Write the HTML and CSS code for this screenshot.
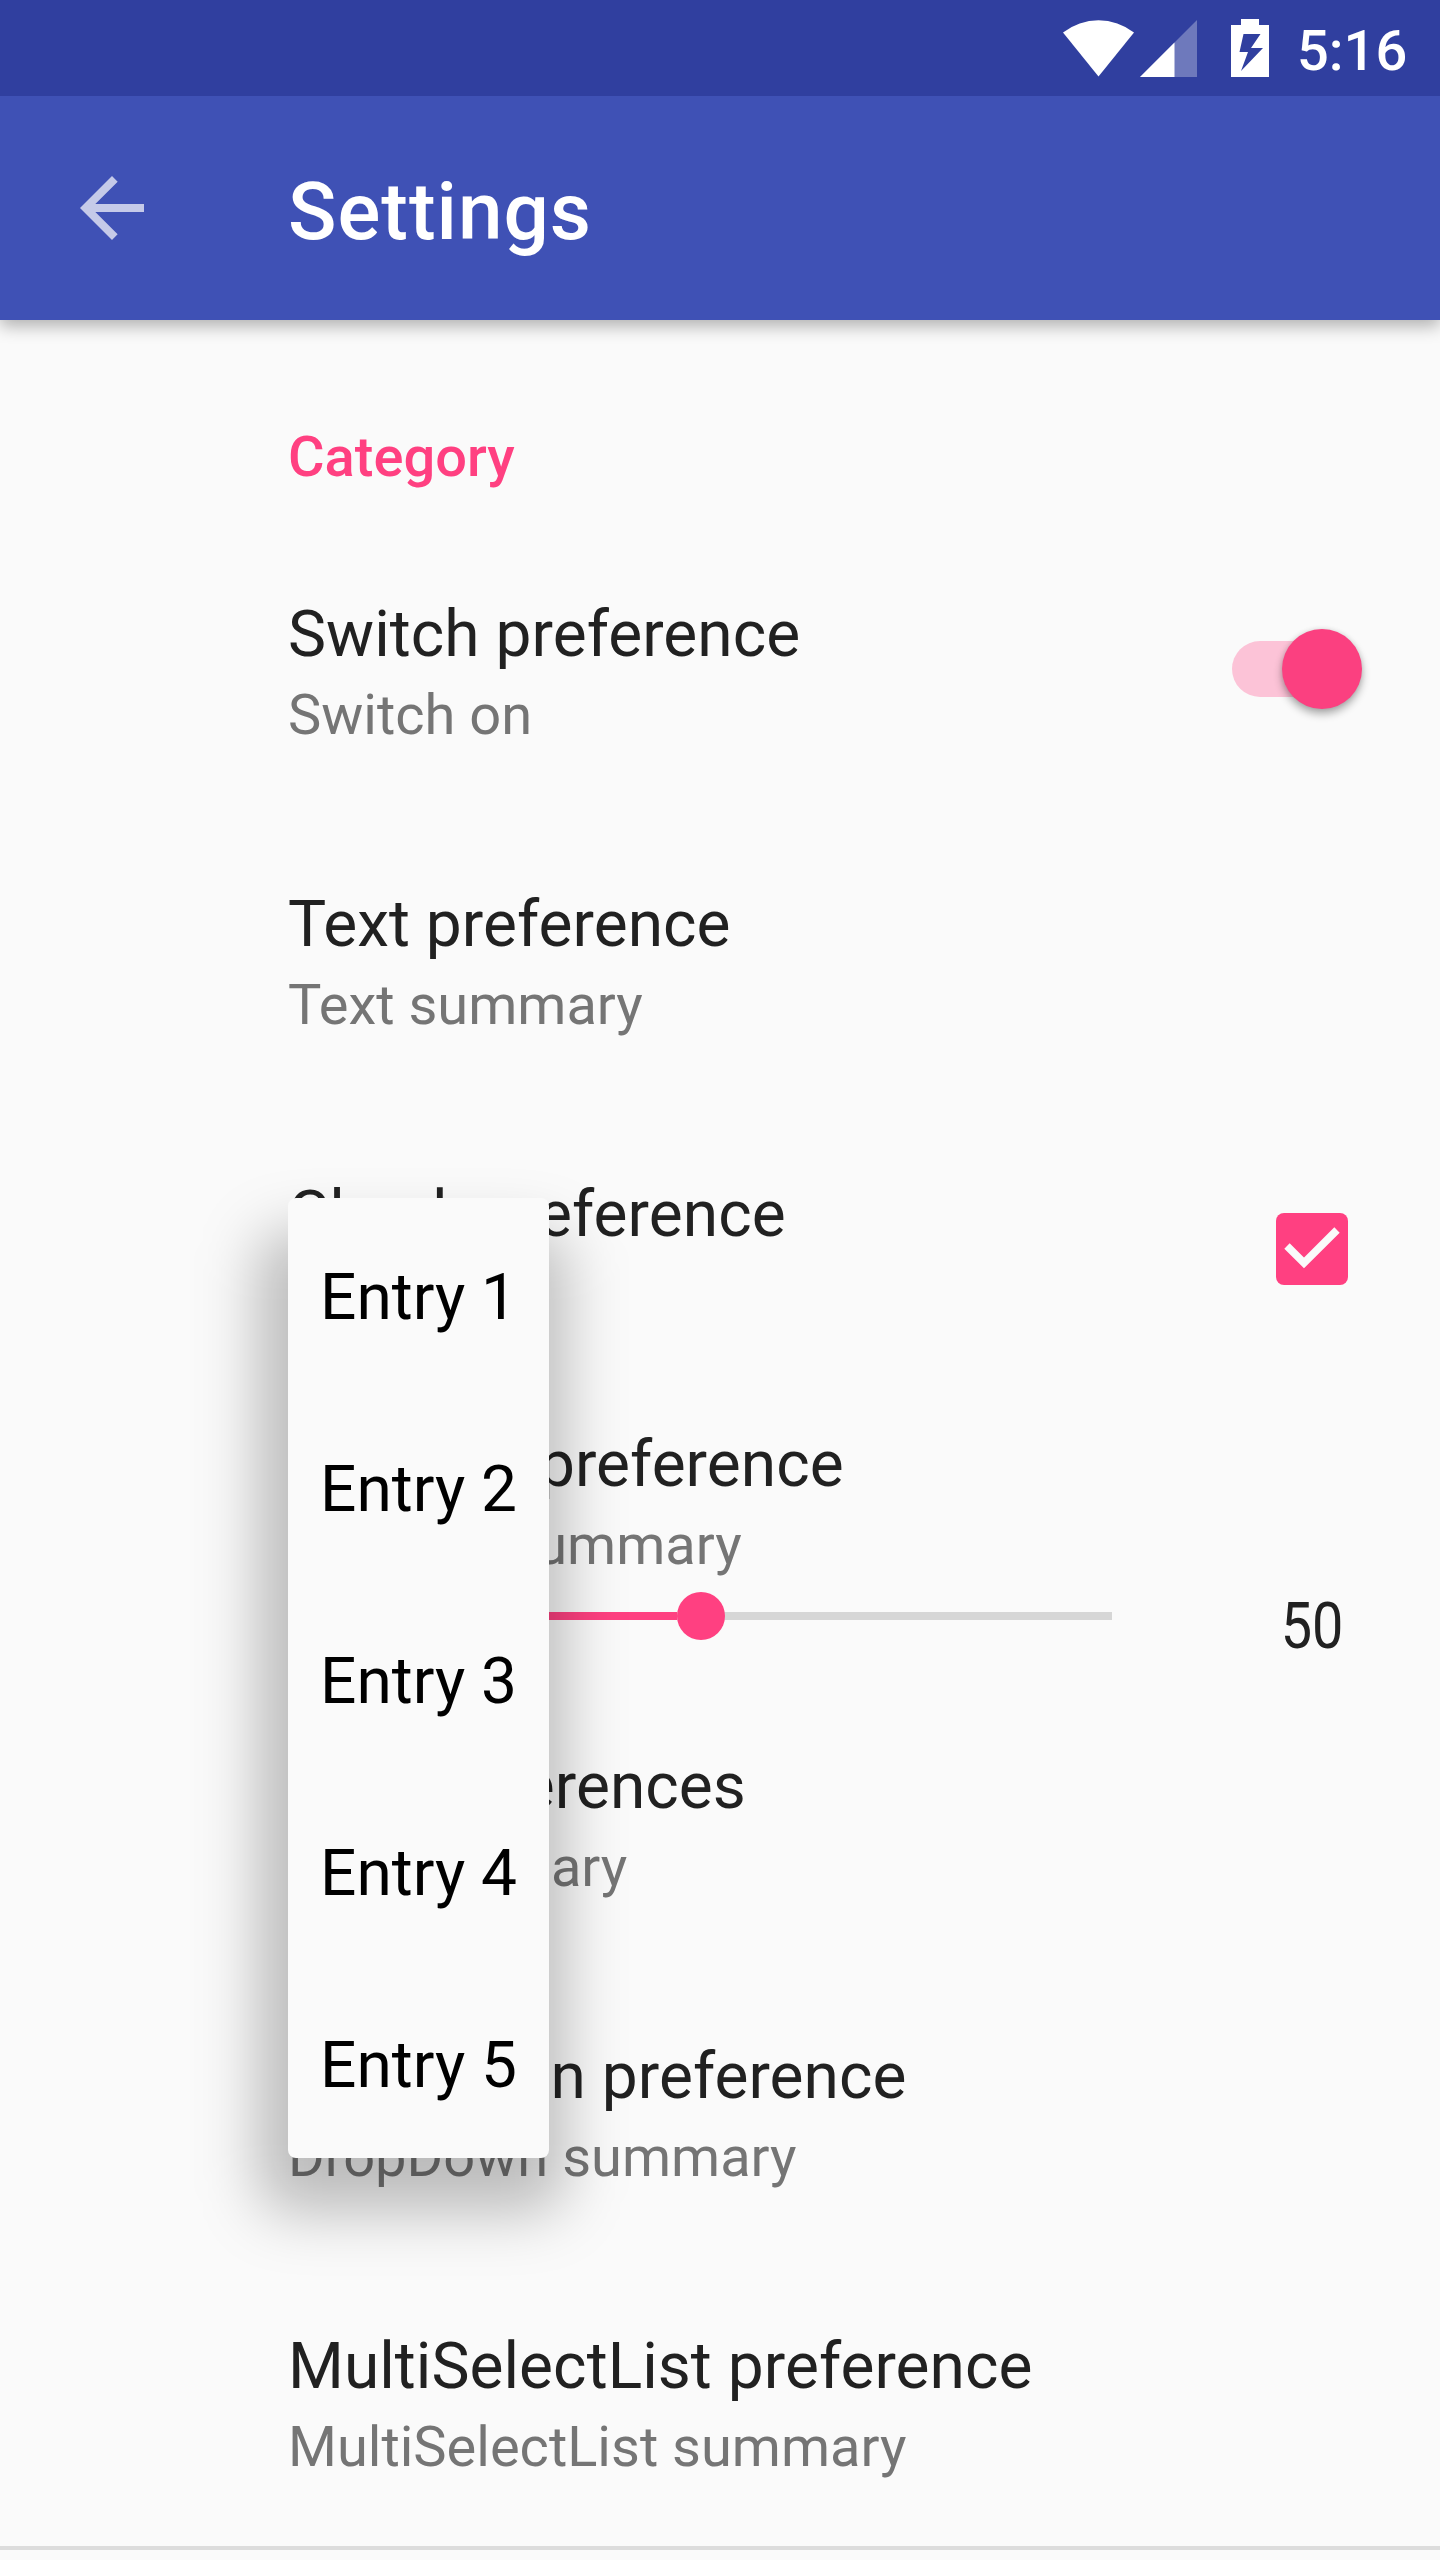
FILE: index.html
```html
<!DOCTYPE html>
<html lang="en">
<head>
<meta charset="utf-8">
<title>Settings</title>
<link rel="stylesheet" href="styles.css">
</head>
<body>
<div class="screen">
  <header class="top">
    <div class="status-bar">
      <svg class="wifi" width="71" height="57" viewBox="0 0 71 57"><path d="M0 12.500A58 58 0 0 1 71 12.500L35.500 56.500Z" fill="#fff"/></svg>
      <svg class="signal" width="57" height="57" viewBox="0 0 57 57"><path d="M57 0V57H0Z" fill="#fff" fill-opacity=".3"/><path d="M34.500 22.500V57H0Z" fill="#fff"/></svg>
      <svg class="battery" width="38" height="58" viewBox="0 0 38 58"><path fill="#fff" fill-rule="evenodd" d="M10 0H28V6H38V58H0V6H10ZM12.500 15L8.500 33H17L10 52L32 29H20L29.500 15Z"/></svg>
      <span class="clock">5:16</span>
    </div>
    <div class="app-bar">
      <svg class="back" width="96" height="96" viewBox="0 0 24 24"><path fill="#c5cae9" d="M20 11H7.830l5.590-5.590L12 4l-8 8 8 8 1.410-1.410L7.830 13H20z"/></svg>
      <h1 class="heading">Settings</h1>
    </div>
  </header>
  <main class="list">
    <h2 class="category">Category</h2>
    <section class="row">
      <div class="text"><div class="title">Switch preference</div><div class="summary">Switch on</div></div>
      <div class="widget switch"><span class="thumb"></span></div>
    </section>
    <section class="row">
      <div class="text"><div class="title">Text preference</div><div class="summary">Text summary</div></div>
    </section>
    <section class="row">
      <div class="text"><div class="title">Check preference</div></div>
      <svg class="widget check" width="72" height="72" viewBox="0 0 72 72"><rect width="72" height="72" rx="8" fill="#ff4081"/><path d="M11 33L28 50L61 17" fill="none" stroke="#fafafa" stroke-width="7.600"/></svg>
    </section>
    <section class="row seek-row">
      <div class="text"><div class="title">SeekBar preference</div><div class="summary">SeekBar summary</div>
        <div class="slider"><span class="fill"></span><span class="knob"></span></div>
      </div>
      <span class="value">50</span>
    </section>
    <section class="row">
      <div class="text"><div class="title">List preferences</div><div class="summary">List summary</div></div>
    </section>
    <section class="row">
      <div class="text"><div class="title">DropDown preference</div><div class="summary">DropDown summary</div></div>
    </section>
    <section class="row last">
      <div class="text"><div class="title">MultiSelectList preference</div><div class="summary">MultiSelectList summary</div></div>
    </section>
  </main>
  <ul class="popup">
    <li>Entry 1</li>
    <li>Entry 2</li>
    <li>Entry 3</li>
    <li>Entry 4</li>
    <li>Entry 5</li>
  </ul>
</div>
</body>
</html>
```
FILE: styles.css
```css
* { box-sizing: border-box; }
body { margin: 0; font-family: Roboto, sans-serif; background: #fafafa; color: #212121; }
svg { display: block; flex: none; }
.screen { position: relative; width: 1440px; height: 2560px; overflow: hidden; }

.top { box-shadow: 0 6px 16px rgba(0, 0, 0, .3); }
.status-bar { display: flex; height: 96px; padding: 19px 32px 0 1063px; background: #303f9f; }
.wifi { margin-top: 1px; }
.signal { margin: 1px 0 0 6px; }
.battery { margin-left: 34px; }
.clock { margin: -1px 0 0 28px; font-size: 56px; line-height: 66px; font-weight: 500; color: #fff; }
.app-bar { display: flex; align-items: center; height: 224px; padding-left: 64px; background: #3f51b5; }
.heading { margin: 8px 0 0 128px; font-size: 80px; line-height: 94px; font-weight: 500; letter-spacing: 1px; color: #fff; }

.category { margin: 0; height: 208px; padding: 99px 0 0 288px; font-size: 56px; line-height: 76px; font-weight: 500; color: #ff4081; }
.row { display: flex; align-items: center; justify-content: space-between; height: 290px; padding-left: 288px; }
.text { height: 162px; white-space: nowrap; }
.title { font-size: 64px; line-height: 85px; letter-spacing: .05px; }
.summary { font-size: 56px; line-height: 76px; color: #757575; }
.widget { margin-bottom: 8px; }
.last { border-bottom: 4px solid #dcdcdc; padding-top: 4px; }

.switch { position: relative; width: 120px; height: 56px; margin-right: 88px; border-radius: 28px; background: #fcc3d7; }
.thumb { position: absolute; top: -12px; left: 50px; width: 80px; height: 80px; border-radius: 50%; background: #fb4080; box-shadow: 0 5px 8px rgba(0, 0, 0, .32), 0 0 5px rgba(0, 0, 0, .1); }
.check { margin-right: 92px; }

.seek-row { height: 282px; padding-top: 24px; align-items: flex-start; }
.slider { display: flex; align-items: center; width: 824px; height: 48px; margin-top: 9px; background: linear-gradient(#d6d6d6, #d6d6d6) center / 100% 8px no-repeat; }
.fill { width: 389px; height: 8px; background: #ff4081; }
.knob { width: 48px; height: 48px; border-radius: 50%; background: #ff4081; }
.value { margin: 167px 92px 0 0; width: 72px; text-align: center; font-size: 64px; line-height: 75px; transform: scaleX(.872); }

.popup { position: absolute; z-index: 1; left: 288px; top: 1198px; width: 261px; height: 960px; margin: 0; padding: 0; list-style: none; }
.popup::before { content: ""; position: absolute; z-index: -1; top: 34px; right: -16px; bottom: -54px; left: -30px; border-radius: 30px; background: rgba(0, 0, 0, .25); filter: blur(30px); }
.popup li { height: 192px; padding: 62px 0 0 32px; background: #fafafa; font-size: 64px; line-height: 75px; color: #000; white-space: nowrap; }
.popup li:first-child { border-radius: 8px 8px 0 0; }
.popup li:last-child { border-radius: 0 0 8px 8px; }
```
